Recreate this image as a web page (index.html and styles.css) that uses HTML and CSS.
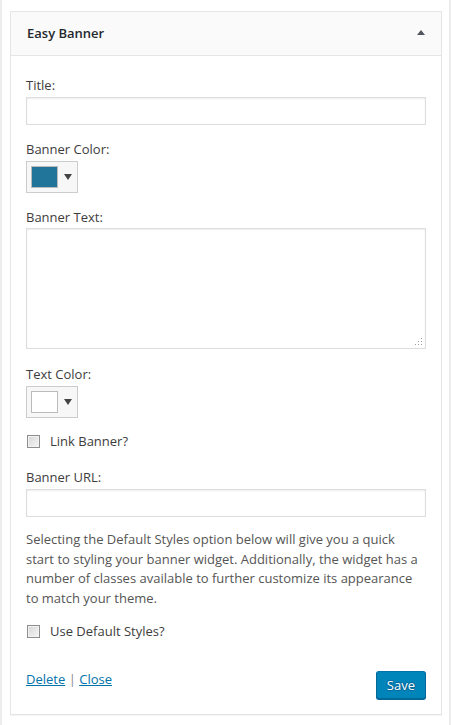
FILE: index.html
```html
<!DOCTYPE html>
<html lang="en">
<head>
<meta charset="utf-8">
<title>Easy Banner</title>
<link rel="stylesheet" href="styles.css">
</head>
<body>
<div class="page">
  <div class="widget">
    <div class="widget-top">
      <h3 class="widget-title">Easy Banner</h3>
      <span class="toggle-arrow"></span>
    </div>
    <div class="widget-inside">
      <div class="field field-first">
        <label class="label">Title:</label>
        <input class="text-input" type="text">
      </div>
      <div class="field">
        <label class="label">Banner Color:</label>
        <div class="picker"><span class="swatch swatch-blue"></span><span class="picker-arrow"></span></div>
      </div>
      <div class="field">
        <label class="label label-tight">Banner Text:</label>
        <div class="textarea-wrap">
          <textarea class="textarea"></textarea>
          <svg class="grip" width="7" height="7" viewBox="0 0 7 7"><rect x="6" y="0" width="1" height="1"/><rect x="3" y="3" width="1" height="1"/><rect x="6" y="3" width="1" height="1"/><rect x="0" y="6" width="1" height="1"/><rect x="3" y="6" width="1" height="1"/><rect x="6" y="6" width="1" height="1"/></svg>
        </div>
      </div>
      <div class="field field-after-area">
        <label class="label">Text Color:</label>
        <div class="picker"><span class="swatch swatch-white"></span><span class="picker-arrow"></span></div>
      </div>
      <label class="check check-link"><input type="checkbox" class="checkbox"><span>Link Banner?</span></label>
      <div class="field field-url">
        <label class="label">Banner URL:</label>
        <input class="text-input" type="text">
      </div>
      <p class="desc">Selecting the Default Styles option below will give you a quick start to styling your banner widget. Additionally, the widget has a number of classes available to further customize its appearance to match your theme.</p>
      <label class="check check-default"><input type="checkbox" class="checkbox"><span>Use Default Styles?</span></label>
      <div class="actions">
        <div class="links"><a href="#" class="link">Delete</a> <span class="sep">|</span> <a href="#" class="link">Close</a></div>
        <button class="save" type="button">Save</button>
      </div>
    </div>
  </div>
</div>
</body>
</html>
```
FILE: styles.css
```css
html, body {
  margin: 0;
  padding: 0;
  background: #fff;
}
body {
  font-family: "Open Sans", "Liberation Sans", sans-serif;
  font-size: 13px;
  color: #3d3d3d;
}
.page {
  width: 451px;
  min-height: 725px;
  box-sizing: border-box;
  border-left: 2px solid #ececec;
  border-right: 2px solid #ececec;
  padding: 11px 7px 0 8px;
}
.widget {
  border: 1px solid #e5e5e5;
  background: #fff;
  box-shadow: 0 1px 1px rgba(0, 0, 0, 0.04);
}
.widget-top {
  display: flex;
  align-items: center;
  justify-content: space-between;
  height: 43px;
  background: #fafafa;
  border-bottom: 1px solid #e5e5e5;
  padding: 0 16px 0 16px;
}
.widget-title {
  margin: 0;
  font-size: 13px;
  font-weight: 600;
  line-height: 43px;
  color: #23282d;
}
.toggle-arrow {
  width: 0;
  height: 0;
  border-left: 4px solid transparent;
  border-right: 4px solid transparent;
  border-bottom: 5px solid #50575e;
  margin-top: -2px;
}
.widget-inside {
  padding: 20px 15px 15px;
}
.field {
  margin-top: 15px;
}
.field-first {
  margin-top: 0;
}
.field-after-area {
  margin-top: 16px;
}
.field-url {
  margin-top: 18px;
}
.label {
  display: block;
  line-height: 18px;
  margin-bottom: 3px;
}
.label-tight {
  margin-bottom: 2px;
}
.text-input {
  display: block;
  width: 100%;
  height: 28px;
  box-sizing: border-box;
  margin: 0;
  border: 1px solid #ddd;
  box-shadow: inset 0 1px 2px rgba(0, 0, 0, 0.07);
  background: #fff;
  font: inherit;
  outline: none;
}
.picker {
  display: flex;
  align-items: center;
  width: 52px;
  height: 32px;
  box-sizing: border-box;
  border: 1px solid #ccc;
  background: #f7f7f7;
  padding: 4px;
}
.swatch {
  width: 27px;
  height: 22px;
  box-sizing: border-box;
  border: 1px solid #bbb;
}
.swatch-blue {
  background: #21759b;
}
.swatch-white {
  background: #fff;
}
.picker-arrow {
  margin-left: 6px;
  width: 0;
  height: 0;
  border-left: 4px solid transparent;
  border-right: 4px solid transparent;
  border-top: 6px solid #444;
}
.textarea-wrap {
  position: relative;
}
.textarea {
  display: block;
  width: 100%;
  height: 121px;
  box-sizing: border-box;
  margin: 0;
  border: 1px solid #ddd;
  box-shadow: inset 0 1px 2px rgba(0, 0, 0, 0.07);
  resize: none;
  font: inherit;
  outline: none;
}
.grip {
  position: absolute;
  right: 4px;
  bottom: 4px;
  fill: #9a9a9a;
}
.check {
  display: flex;
  align-items: center;
  gap: 10px;
  line-height: 18px;
  padding-left: 1px;
}
.check-link {
  margin-top: 14px;
}
.check-default {
  margin-top: 14px;
}
.checkbox {
  appearance: none;
  -webkit-appearance: none;
  width: 13px;
  height: 13px;
  margin: 0;
  box-sizing: border-box;
  border: 1px solid #8e8e8e;
  background: linear-gradient(135deg, #d6d6d6 0%, #f6f6f6 100%);
  box-shadow: inset 0 0 0 1px #f2f2f2;
}
.desc {
  margin: 13px 0 0;
  line-height: 19.5px;
  color: #555;
}
.actions {
  margin-top: 31px;
  display: flex;
  justify-content: space-between;
  align-items: flex-start;
}
.links {
  line-height: 16px;
}
.link {
  color: #0073aa;
  text-decoration: underline;
}
.sep {
  color: #888;
}
.save {
  height: 28px;
  margin: 0;
  padding: 0 10px;
  box-sizing: border-box;
  border: 1px solid #0073aa;
  border-color: #0073aa #006799 #006799;
  border-radius: 3px;
  background: #0085ba;
  box-shadow: 0 1px 0 #006799;
  color: #fff;
  font: inherit;
  line-height: 26px;
  text-shadow: 0 -1px 1px #006799, 1px 0 1px #006799, 0 1px 1px #006799, -1px 0 1px #006799;
}
```
